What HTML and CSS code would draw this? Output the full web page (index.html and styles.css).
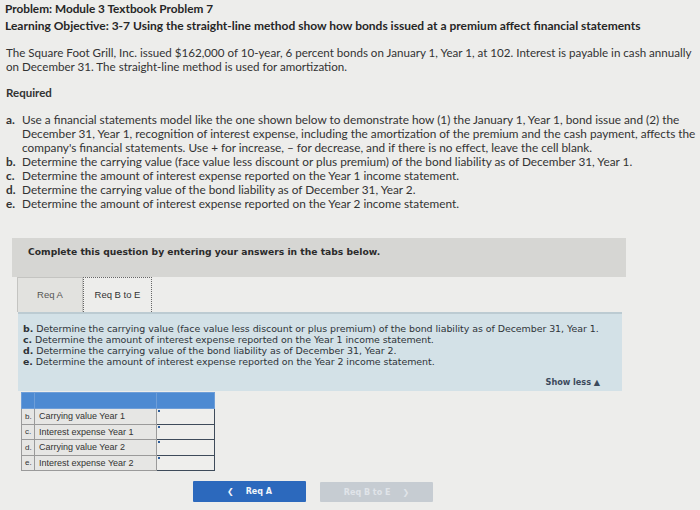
FILE: index.html
```html
<!DOCTYPE html>
<html>
<head>
<meta charset="utf-8">
<link rel="stylesheet" href="styles.css">
</head>
<body>
<div class="page">
  <div class="heading">
    <div class="title t1">Problem: Module 3 Textbook Problem 7</div>
    <div class="title">Learning Objective: 3-7 Using the straight-line method show how bonds issued at a premium affect financial statements</div>
  </div>
  <p class="intro">The Square Foot Grill, Inc. issued $162,000 of 10-year, 6 percent bonds on January 1, Year 1, at 102. Interest is payable in cash annually on December 31. The straight-line method is used for amortization.</p>
  <div class="required">Required</div>
  <ol class="reqs">
    <li><span class="lt">a.</span><span class="tx">Use a financial statements model like the one shown below to demonstrate how (1) the January 1, Year 1, bond issue and (2) the December 31, Year 1, recognition of interest expense, including the amortization of the premium and the cash payment, affects the company's financial statements. Use + for increase, &ndash; for decrease, and if there is no effect, leave the cell blank.</span></li>
    <li><span class="lt">b.</span><span class="tx">Determine the carrying value (face value less discount or plus premium) of the bond liability as of December 31, Year 1.</span></li>
    <li><span class="lt">c.</span><span class="tx">Determine the amount of interest expense reported on the Year 1 income statement.</span></li>
    <li><span class="lt">d.</span><span class="tx">Determine the carrying value of the bond liability as of December 31, Year 2.</span></li>
    <li><span class="lt">e.</span><span class="tx">Determine the amount of interest expense reported on the Year 2 income statement.</span></li>
  </ol>

  <div class="complete">Complete this question by entering your answers in the tabs below.</div>

  <div class="tabs">
    <div class="tab">Req A</div>
    <div class="tab active">Req B to E</div>
  </div>

  <div class="panel">
    <div class="pline"><b>b.</b> Determine the carrying value (face value less discount or plus premium) of the bond liability as of December 31, Year 1.</div>
    <div class="pline"><b>c.</b> Determine the amount of interest expense reported on the Year 1 income statement.</div>
    <div class="pline"><b>d.</b> Determine the carrying value of the bond liability as of December 31, Year 2.</div>
    <div class="pline"><b>e.</b> Determine the amount of interest expense reported on the Year 2 income statement.</div>
    <div class="showless">Show less &#9650;</div>
  </div>

  <table class="ans">
    <tr class="head"><th class="c1"></th><th class="c2"></th><th class="c3"></th></tr>
    <tr><td class="c1">b.</td><td class="c2">Carrying value Year 1</td><td class="c3"><div class="inp"></div></td></tr>
    <tr><td class="c1">c.</td><td class="c2">Interest expense Year 1</td><td class="c3"><div class="inp"></div></td></tr>
    <tr><td class="c1">d.</td><td class="c2">Carrying value Year 2</td><td class="c3"><div class="inp"></div></td></tr>
    <tr><td class="c1">e.</td><td class="c2">Interest expense Year 2</td><td class="c3"><div class="inp"></div></td></tr>
  </table>

  <div class="nav">
    <div class="btn prev"><span class="chev">&#10094;</span>Req A</div>
    <div class="btn next">Req B to E<span class="chev">&#10095;</span></div>
  </div>
</div>
</body>
</html>
```
FILE: styles.css
```css
html, body {
  margin: 0;
  padding: 0;
}
body {
  background: #ededeb;
  width: 700px;
  height: 510px;
  overflow: hidden;
  font-family: Lato, "Open Sans", sans-serif;
  color: #2a2a2a;
}
.page {
  padding: 1px 0 0 5px;
}
.heading .title {
  font-size: 12px;
  font-weight: 700;
  line-height: 16.5px;
  color: #262626;
  white-space: nowrap;
}
.heading .t1 {
  font-size: 11.8px;
}
.intro {
  margin: 12px 0 0 1px;
  font-size: 11.6px;
  line-height: 14px;
  color: #333;
  width: 699px;
}
.required {
  margin: 12px 0 0 1px;
  font-size: 11.5px;
  font-weight: 700;
  line-height: 14px;
  color: #333;
}
.reqs {
  list-style: none;
  margin: 13px 0 0 1px;
  padding: 0;
  font-size: 11.8px;
  line-height: 14px;
  color: #333;
}
.reqs li {
  display: flex;
}
.reqs .lt {
  flex: 0 0 16px;
  font-weight: 700;
}
.reqs .tx {
  width: 678px;
}
.complete {
  margin: 27px 0 0 7px;
  width: 614px;
  height: 39px;
  box-sizing: border-box;
  padding: 8px 0 0 16px;
  background: #d6d6d3;
  font-family: "DejaVu Sans", Verdana, sans-serif;
  font-size: 9.2px;
  font-weight: 700;
  color: #2b2b2b;
}
.tabs {
  display: flex;
  margin: 0 0 0 12px;
  height: 35px;
}
.tab {
  width: 66px;
  box-sizing: border-box;
  border: 1px solid #c4c4c1;
  border-bottom: none;
  background: #e2e2df;
  font-family: "Liberation Sans", Arial, sans-serif;
  font-size: 9.5px;
  color: #555;
  display: flex;
  align-items: center;
  justify-content: center;
  padding-bottom: 2px;
}
.tab.active {
  width: 69px;
  background: #ededeb;
  border: 1px dotted #666;
  border-bottom: none;
  color: #333;
}
.panel {
  margin: 0 0 0 13px;
  width: 604px;
  height: 79px;
  box-sizing: border-box;
  background: #d3e1e7;
  border-top: 2px solid #bccbd2;
  padding: 9px 0 0 5px;
  font-family: "DejaVu Sans", Verdana, sans-serif;
  font-size: 9.45px;
  line-height: 11px;
  color: #2e3338;
  letter-spacing: -0.05px;
}
.pline b {
  font-weight: 700;
}
.showless {
  text-align: right;
  margin: 10px 22px 0 0;
  font-weight: 700;
  font-size: 8.2px;
  color: #3c4a5c;
}
.ans {
  margin: 1px 0 0 16px;
  border-collapse: collapse;
  table-layout: fixed;
  width: 193px;
  font-family: "Liberation Sans", Arial, sans-serif;
  font-size: 9px;
  color: #333;
}
.ans td, .ans th {
  padding: 0;
  border: 1px solid #9a9a9a;
  box-sizing: border-box;
}
.ans .head th {
  background: #4d8ad2;
  border-color: #6e9ed8;
  height: 16px;
}
.ans .c1 {
  width: 13px;
  padding-left: 3px;
  font-size: 8px;
}
.ans .c2 {
  width: 122px;
  padding-left: 4px;
}
.ans .c3 {
  width: 58px;
  padding: 0;
}
.ans td {
  height: 15.5px;
  background: #e6e6e4;
}
.ans tr td.c3 {
  border: 1px solid #3e4b5a;
  background: #eeeeec;
  position: relative;
}
.inp {
  height: 13px;
}
.inp::before {
  content: "";
  position: absolute;
  left: 1px;
  top: 1px;
  width: 2px;
  height: 2px;
  background: #2b5c9a;
}
.nav {
  display: flex;
  gap: 14px;
  margin: 10px 0 0 188px;
}
.btn {
  width: 113px;
  height: 21px;
  box-sizing: border-box;
  display: flex;
  align-items: center;
  justify-content: center;
  font-family: "DejaVu Sans", Verdana, sans-serif;
  font-size: 8px;
  font-weight: 700;
  border-radius: 1px;
}
.btn.prev {
  background: #2c69bd;
  color: #f2f5fa;
}
.btn.prev .chev {
  margin-right: 12px;
  font-size: 8px;
}
.btn.next {
  background: #c6ccd2;
  color: #e0e4e9;
  height: 20px;
  margin-top: 1px;
}
.btn.next .chev {
  margin-left: 12px;
  font-size: 8px;
}
```
